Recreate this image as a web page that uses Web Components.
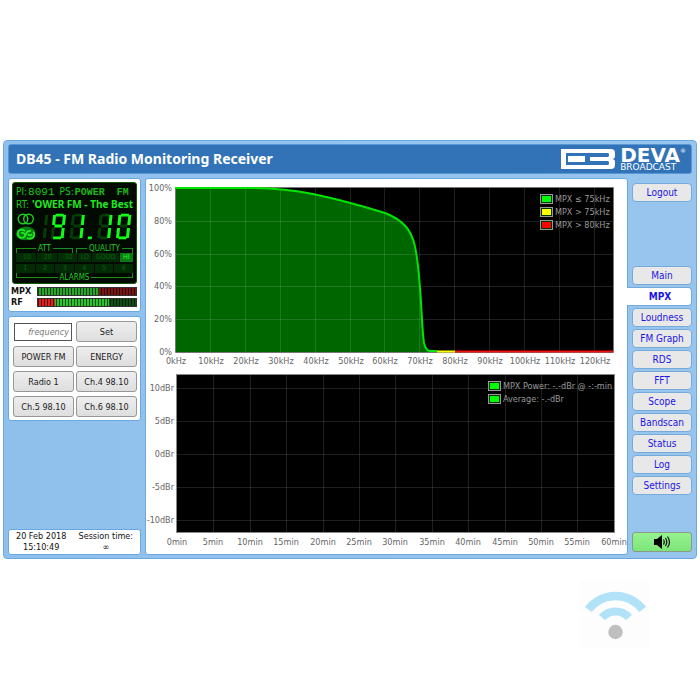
<!DOCTYPE html>
<html lang="en">
<head>
<meta charset="utf-8">
<title>DB45 - FM Radio Monitoring Receiver</title>
<style>
  body { margin: 0; background: #fff; color: #222; font-family: "DejaVu Sans Condensed", "DejaVu Sans", sans-serif; font-stretch: condensed; font-size: 10px; }
</style>
</head>
<body>
<db-app></db-app>
<script>
const define = (name, html) => customElements.define(name, class extends HTMLElement {
  connectedCallback() {
    if (this.shadowRoot) return;
    const root = this.attachShadow({ mode: 'open' });
    root.innerHTML = '<style>*{box-sizing:border-box}</style>' + (typeof html === 'function' ? html(this) : html);
  }
});

define('db-panel', `
  <style>
    :host { display: block; box-sizing: border-box; background: #fff; border: 1px solid #69a9e0; border-radius: 3px; }
  </style><slot></slot>`);

define('db-header', `
  <style>
    :host { display: flex; align-items: center; justify-content: space-between; height: 30px; padding: 0 5px 0 7px; box-sizing: border-box;
      background: #3173b6; border: 1px solid #5697d6; border-radius: 3px; color: #fff; }
    h1 { margin: 0; font: bold 14px/20px "Noto Sans", sans-serif; white-space: nowrap; }
    .brand { display: flex; align-items: center; gap: 4px; }
    .name { display: grid; }
    b { font: bold 20px/15px "DejaVu Sans", sans-serif; }
    .deva { display: flex; }
    sup { font: 6px/6px "DejaVu Sans", sans-serif; }
    small { font: 9px/8px "DejaVu Sans", sans-serif; }
  </style>
  <h1>DB45 - FM Radio Monitoring Receiver</h1>
  <div class="brand">
    <svg width="55" height="20" viewBox="0 0 55 20" aria-hidden="true">
      <path fill="#fff" fill-rule="evenodd" d="M0 0H28V4H5V16H28V20H0ZM7 7H24V13H7ZM29 0H50Q54 0 54 4V7Q54 10 51 10Q54 10 54 13V16Q54 20 50 20H29V16H47Q48 16 48 14Q48 12 47 12H29V8H47Q48 8 48 6Q48 4 47 4H29Z"/>
      <path fill="#fff" d="M26 0h5v4h-5zM26 16h5v4h-5z"/>
    </svg>
    <div class="name"><span class="deva"><b>DEVA</b><sup>®</sup></span><small>BROADCAST</small></div>
  </div>`);

/* Seven-segment readout: dim lamps first, then the lit ones over them. */
const SEG = {
  a: 'M4 2H12', b: 'M13 2V12', c: 'M13 15V25', d: 'M4 25H12', e: 'M3 15V25', f: 'M3 2V12', g: 'M4 13H12'
};
const DIGITS = [['', -8, 'bc'], ['abcdfg', 10], ['bc', 29], ['bc', 57], ['abcdef', 76]];
define('seven-segment', el => {
  const lamps = (set, x, cls) => [...set].map(s => `<path transform="translate(${x} 0)" class="${cls}" d="${SEG[s]}"/>`).join('');
  return `<style>
    :host { display: block; }
    svg { display: block; width: 100%; height: 27px; }
    .off { stroke: #053d05; } .on { stroke: #10ff18; }
    path { stroke-width: 3; fill: none; }
  </style>
  <svg viewBox="0 0 95 27" preserveAspectRatio="xMidYMid meet" role="img" aria-label="${el.getAttribute('value')} MHz">
    <g transform="translate(3 0) skewX(-6)">
      ${DIGITS.map(([, x, all = 'abcdefg']) => lamps(all, x, 'off')).join('')}
      ${DIGITS.map(([lit, x]) => lamps(lit, x, 'on')).join('')}
      <path class="on" d="M49 25h4"/>
    </g>
  </svg>`;
});

define('lcd-display', `
  <style>
    :host { display: block; background: #020a02; border: 1px solid #0a5a0a; border-radius: 3px; color: #1fc51f; padding: 3px 3px 1px; overflow: hidden; }
    .row { display: flex; align-items: baseline; height: 12px; white-space: nowrap; font-size: 10px; line-height: 12px; gap: 1px; }
    .mono { font-family: "Liberation Mono", monospace; font-size: 11px; }
    .ps { font-family: "Liberation Mono", monospace; font-size: 10px; font-weight: bold; white-space: pre; color: #1fb51f; }
    .gap { margin-left: 4px; }
    .rt { margin-left: auto; font: bold 10px/12px "Noto Sans", sans-serif; color: #20e820; }
    .main { display: flex; gap: 3px; margin-top: 3px; height: 27px; }
    .icons { flex: none; display: block; }
    seven-segment { flex: 1; min-width: 0; }
    .heads { display: grid; grid-template-columns: 1fr 1fr; gap: 3px; margin-top: 4px; }
    .cap { display: flex; gap: 2px; font-size: 8px; line-height: 9px; height: 9px; color: #22d022; }
    .cap i { flex: 1; height: 5px; margin-top: 4px; border-top: 1px solid #1a8f1a; }
    .cap i:first-child { border-left: 1px solid #1a8f1a; } .cap i:last-child { border-right: 1px solid #1a8f1a; }
    .cap.low i { margin: 0; border-top: 0; border-bottom: 1px solid #1a8f1a; }
    .cells { display: grid; gap: 1px; font-size: 7px; line-height: 9px; color: #0b6310; text-align: center; }
    .cells span { background: #032b05; }
    .q { grid-template-columns: 3fr 3fr 3fr 2fr 4fr 2fr; }
    .n { grid-template-columns: repeat(6, 1fr); margin-top: 2px; }
    .cells .hi { background: #0a7a12; color: #2df52d; }
  </style>
  <div class="row"><span>PI:</span><span class="mono">8091</span><span class="gap">PS:</span><span class="ps">POWER  FM</span></div>
  <div class="row"><span>RT:</span><span class="rt">'OWER FM - The Best</span></div>
  <div class="main">
    <svg class="icons" width="20" height="28" viewBox="0 0 20 28" fill="none" aria-hidden="true">
      <g stroke="#1fd01f" stroke-width="1.4"><circle cx="7" cy="6" r="4.8"/><circle cx="12.5" cy="6" r="4.8"/></g>
      <path fill="#0a7a12" d="M4 15Q10 12 16 15Q20 17 19 22Q17 28 10 27Q2 28 0 22Q0 17 4 15Z"/>
      <g stroke="#25ee25" stroke-width="1.7"><path d="M9 18Q4 15 2 19Q1 23 5 25Q9 25 10 21Q11 17 15 18"/><path d="M5 20Q8 19 9 22M11 25Q16 27 18 23Q19 20 17 19M12 21Q14 24 16 21"/></g>
    </svg>
    <seven-segment value="91.10"></seven-segment>
  </div>
  <div class="heads"><div class="cap"><i></i>ATT<i></i></div><div class="cap"><i></i>QUALITY<i></i></div></div>
  <div class="cells q"><span>-10</span><span>-20</span><span>-30</span><span>LO</span><span>GOOD</span><span class="hi">HI</span></div>
  <div class="cells n"><span>1</span><span>2</span><span>3</span><span>4</span><span>5</span><span>6</span></div>
  <div class="cap low"><i></i>ALARMS<i></i></div>`);

define('level-meter', `
  <style>
    :host { display: grid; grid-template-columns: 24px 1fr; gap: 2px; align-items: center; height: 11px; font-weight: bold; font-size: 9px; line-height: 11px; color: #111; }
    .bar { height: 9px; background: repeating-linear-gradient(90deg, #0009 0 1px, transparent 1px 3px), var(--zones); border: 1px solid #333; }
  </style>
  <span><slot></slot></span><div class="bar"></div>`);

define('db-presets', `
  <style>
    :host { display: grid; grid-template-columns: 1fr 1fr; gap: 4px 2px; padding: 4px 3px 3px 4px; }
    button, input { font: 9px/12px "DejaVu Sans Condensed", "DejaVu Sans", sans-serif; font-stretch: condensed; height: 21px; min-width: 0; width: 100%; color: #222; }
    button { background: linear-gradient(#eee, #dedede); border: 1px solid #979797; border-radius: 3px; padding: 0; white-space: nowrap; }
    input { height: 18px; width: auto; margin: 2px 2px 1px 1px; border: 1px solid #555; padding: 0 2px; text-align: right; font-style: italic; background: #fff; }
    input::placeholder { color: #777; }
  </style>
  <input type="text" placeholder="frequency" aria-label="frequency"><button>Set</button>
  <button>POWER FM</button><button>ENERGY</button>
  <button>Radio 1</button><button>Ch.4 98.10</button>
  <button>Ch.5 98.10</button><button>Ch.6 98.10</button>`);

define('session-info', `
  <style>
    :host { display: grid; grid-template-columns: auto auto; justify-content: space-between; padding: 1px 7px; text-align: center; font-size: 9px; line-height: 11px; color: #111; white-space: nowrap; }
  </style>
  <span>20 Feb 2018<br>15:10:49</span><span>Session time:<br>∞</span>`);

const chartStyle = `<style>
  :host { display: block; }
  svg { display: block; width: 100%; height: auto; }
  text { font-size: 9px; fill: #666; }
  .grid { stroke: #fff; stroke-opacity: .12; fill: none; }
  .legend text { fill: #999; }
</style>`;
const legend = (x, y, items) => `<g class="legend">` + items.map(([c, t], i) => {
  const top = y + i * 13;
  return `<rect x="${x}" y="${top}" width="13" height="10" fill="#999"/><rect x="${x + 1}" y="${top + 1}" width="11" height="8" fill="#030"/><rect x="${x + 2}" y="${top + 2}" width="9" height="6" fill="${c}"/><text x="${x + 15}" y="${top + 8}">${t}</text>`;
}).join('') + '</g>';

define('mpx-chart', () => {
  const xs = [...Array(13).keys()].map(i => 29 + Math.round(i * 34.9));
  const ys = [0, 1, 2, 3, 4, 5].map(i => 9 + Math.round(i * 32.8));
  const curve = 'M29 9H100C125 9 146 11 167 15C186 19 210 25 239 34C252 39 262 47 266 58C270 66 272 82 274 109C276 135 276 150 278 164Q280 172 284 172H291';
  return chartStyle + `<svg viewBox="0 0 481 190" role="img" aria-label="MPX deviation">
    <rect x="29" y="8" width="438" height="165" fill="#000"/>
    <path d="${curve}V173H29Z" fill="#060"/>
    <path class="grid" d="${xs.slice(1).map(x => `M${x}.5 9V173`).join('')}${ys.slice(1, 5).map(y => `M29 ${y}.5H467`).join('')}"/>
    <path d="M29.500 8V173.500H467.500V8.500H29" fill="none" stroke="#777"/>
    <path d="${curve}" fill="none" stroke="#00e600" stroke-width="2"/>
    <path d="M291 172.500H309" stroke="#ff0" stroke-width="2"/><path d="M309 172.500H467" stroke="#f01010" stroke-width="2"/>
    <g text-anchor="end">${ys.map((y, i) => `<text x="26" y="${y + 3}">${100 - i * 20}%</text>`).join('')}</g>
    <g text-anchor="middle">${xs.map((x, i) => `<text x="${x + 1}" y="185">${i * 10}kHz</text>`).join('')}</g>
    ${legend(394, 15, [['#0f0', 'MPX ≤ 75kHz'], ['#ff0', 'MPX &gt; 75kHz'], ['#f00', 'MPX &gt; 80kHz']])}
  </svg>`;
});

define('power-chart', () => {
  const xs = [...Array(13).keys()].map(i => 31 + Math.round(i * 36.4));
  const ys = [0, 1, 2, 3, 4].map(i => 19 + i * 33);
  return chartStyle + `<svg viewBox="0 0 481 185" role="img" aria-label="MPX power history">
    <rect x="30.500" y="5.500" width="438" height="158" fill="#000" stroke="#888"/>
    <path class="grid" d="${xs.slice(1, 12).map(x => `M${x}.5 6V163`).join('')}${ys.map(y => `M31 ${y}.5H468`).join('')}"/>
    <g text-anchor="end">${ys.map((y, i) => `<text x="28" y="${y + 3}">${10 - i * 5}dBr</text>`).join('')}</g>
    <g text-anchor="middle">${xs.map((x, i) => `<text x="${x}" y="176">${i * 5}min</text>`).join('')}</g>
    ${legend(342, 12, [['#0f0', 'MPX Power: -.-dBr @ -:-min'], ['#0f0', 'Average: -.-dBr']])}
  </svg>`;
});

define('nav-link', el => `
  <style>
    :host { display: block; }
    a { display: block; height: 19px; font-size: 10px; line-height: 17px; text-align: center; text-decoration: none; color: #1c14e6; background: #e8e8e9; border: 1px solid #75aadb; border-radius: 4px; white-space: nowrap; }
    :host([active]) a { margin-left: -5px; padding-left: 2px; background: #fff; border-left: 0; border-radius: 0 4px 4px 0; font-weight: bold; }
  </style>
  <a href="#${el.textContent.trim().toLowerCase().replace(/ /g, '-')}"${el.hasAttribute('active') ? ' aria-current="page"' : ''}><slot></slot></a>`);

define('side-nav', `
  <style>
    :host { display: flex; flex-direction: column; padding: 5px 0 3px; }
    nav { display: grid; gap: 2px; margin-top: 64px; }
    button { margin-top: auto; height: 20px; padding: 0; background: linear-gradient(#96f28f, #7de57a); border: 1px solid #8b9a86; border-radius: 3px; }
    svg { display: block; margin: auto; }
  </style>
  <nav-link>Logout</nav-link>
  <nav aria-label="Pages">
    <nav-link>Main</nav-link><nav-link active>MPX</nav-link><nav-link>Loudness</nav-link><nav-link>FM Graph</nav-link>
    <nav-link>RDS</nav-link><nav-link>FFT</nav-link><nav-link>Scope</nav-link><nav-link>Bandscan</nav-link>
    <nav-link>Status</nav-link><nav-link>Log</nav-link><nav-link>Settings</nav-link>
  </nav>
  <button aria-label="Listen">
    <svg width="18" height="14" viewBox="0 0 18 14" aria-hidden="true"><path d="M1 4H4L9 0V14L4 10H1Z"/><path d="M10.500 4.500Q12 7 10.500 9.500M12.500 3Q15 7 12.500 11M14.500 1.500Q18.500 7 14.500 12.500" fill="none" stroke="#111" stroke-width="1.200"/></svg>
  </button>`);

define('wifi-mark', `
  <style>:host { display: block; } svg { display: block; }</style>
  <svg width="69" height="69" viewBox="0 0 69 69" fill="none" aria-hidden="true">
    <rect width="69" height="69" fill="#fdfdfd"/>
    <path d="M8.300 29.500A34 34 0 0 1 62.700 29.500" stroke="#b2e2f7" stroke-width="8.500"/>
    <path d="M22 37.500A18 18 0 0 1 49 37.500" stroke="#b2e2f7" stroke-width="8"/>
    <circle cx="35.500" cy="52" r="7.200" fill="#bfbfbf"/>
  </svg>`);

define('db-app', `
  <style>
    :host { display: block; padding: 140px 3px 0; }
    .frame { background: linear-gradient(90deg, #8fc0ec, #98c5ed); border: 1px solid #69a9e0; border-radius: 4px; padding: 3px 4px; }
    main { display: grid; grid-template-columns: 133px minmax(0, 1fr) 60px; gap: 4px; margin-top: 4px; }
    .left { display: flex; flex-direction: column; gap: 4px; }
    .signal { padding: 3px; }
    lcd-display { margin-bottom: 2px; }
    level-meter { margin-left: -1px; }
    .info { margin-top: auto; }
    .mpx { --zones: linear-gradient(90deg, #2ca52c 0 62%, #7a1515 62%); }
    .rf { --zones: linear-gradient(90deg, #e02020 0 17%, #2cc42c 17% 72%, #0d4f14 72%); }
    footer { display: flex; justify-content: flex-end; padding: 21px 48px 0 0; }
  </style>
  <div class="frame">
    <db-header></db-header>
    <main>
      <div class="left">
        <db-panel class="signal"><lcd-display></lcd-display><level-meter class="mpx">MPX</level-meter><level-meter class="rf">RF</level-meter></db-panel>
        <db-panel><db-presets></db-presets></db-panel>
        <db-panel class="info"><session-info></session-info></db-panel>
      </div>
      <db-panel><mpx-chart></mpx-chart><power-chart></power-chart></db-panel>
      <side-nav></side-nav>
    </main>
  </div>
  <footer><wifi-mark></wifi-mark></footer>`);
</script>
</body>
</html>
